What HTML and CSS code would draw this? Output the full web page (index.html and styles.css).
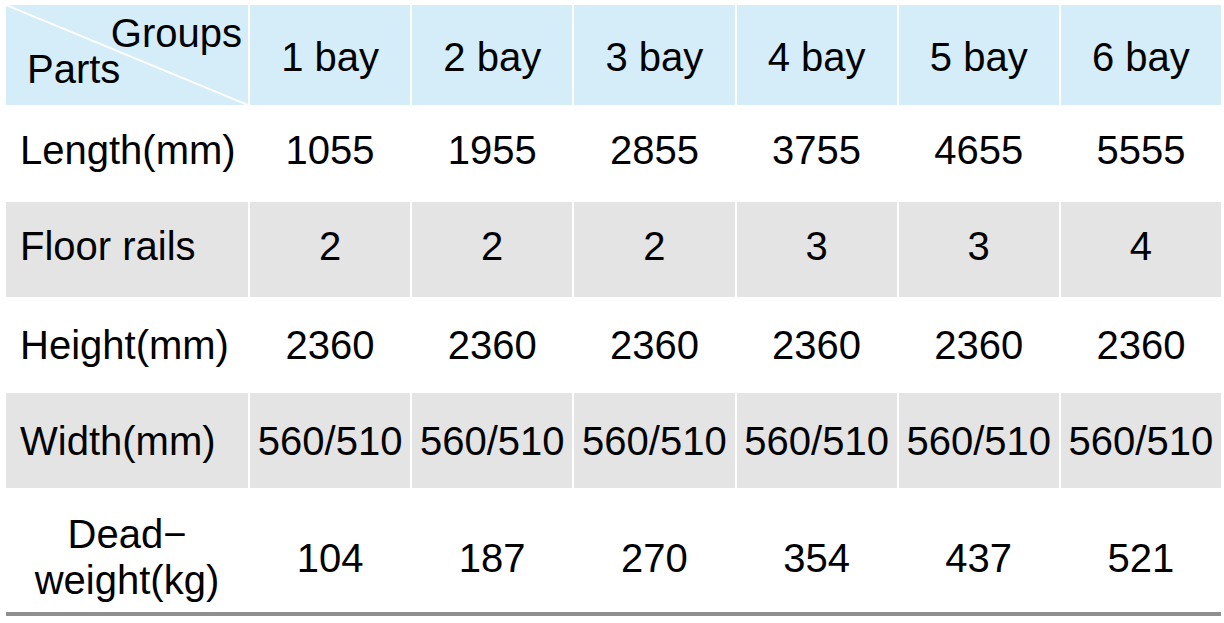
FILE: index.html
```html
<!DOCTYPE html>
<html lang="en">
<head>
<meta charset="utf-8">
<title>Bay specifications</title>
<link rel="stylesheet" href="styles.css">
</head>
<body>
<div class="spec">
  <div class="cell corner">
    <svg class="diag" viewBox="0 0 100 100" preserveAspectRatio="none" aria-hidden="true">
      <line x1="0" y1="0" x2="100" y2="100" stroke="#ffffff" stroke-width="2" vector-effect="non-scaling-stroke"/>
    </svg>
    <div class="groups">Groups</div>
    <div class="parts">Parts</div>
  </div>
  <div class="cell head">1 bay</div>
  <div class="cell head">2 bay</div>
  <div class="cell head">3 bay</div>
  <div class="cell head">4 bay</div>
  <div class="cell head">5 bay</div>
  <div class="cell head">6 bay</div>

  <div class="cell label up">Length(mm)</div>
  <div class="cell up">1055</div>
  <div class="cell up">1955</div>
  <div class="cell up">2855</div>
  <div class="cell up">3755</div>
  <div class="cell up">4655</div>
  <div class="cell up">5555</div>

  <div class="cell label alt up">Floor rails</div>
  <div class="cell alt up">2</div>
  <div class="cell alt up">2</div>
  <div class="cell alt up">2</div>
  <div class="cell alt up">3</div>
  <div class="cell alt up">3</div>
  <div class="cell alt up">4</div>

  <div class="cell label">Height(mm)</div>
  <div class="cell">2360</div>
  <div class="cell">2360</div>
  <div class="cell">2360</div>
  <div class="cell">2360</div>
  <div class="cell">2360</div>
  <div class="cell">2360</div>

  <div class="cell label alt">Width(mm)</div>
  <div class="cell alt">560/510</div>
  <div class="cell alt">560/510</div>
  <div class="cell alt">560/510</div>
  <div class="cell alt">560/510</div>
  <div class="cell alt">560/510</div>
  <div class="cell alt">560/510</div>

  <div class="cell label two-line">Dead−<br>weight(kg)</div>
  <div class="cell last">104</div>
  <div class="cell last">187</div>
  <div class="cell last">270</div>
  <div class="cell last">354</div>
  <div class="cell last">437</div>
  <div class="cell last">521</div>
</div>
</body>
</html>
```

FILE: styles.css
```css
html, body {
  margin: 0;
  padding: 0;
  background: #ffffff;
}

body {
  font-family: "Liberation Sans", Arial, sans-serif;
  color: #000000;
}

.spec {
  display: grid;
  grid-template-columns: 242px repeat(6, 1fr);
  grid-template-rows: 100px 93px 95px 92px 95px 122px;
  column-gap: 2px;
  row-gap: 2px;
  width: 1215px;
  margin: 5px 0 0 6px;
  border-bottom: 4px solid #8f8f8f;
}

.cell {
  display: flex;
  align-items: center;
  justify-content: center;
  box-sizing: border-box;
  font-size: 40px;
  line-height: 44px;
  white-space: nowrap;
  background: #ffffff;
}

.head {
  background: #d5ecf9;
  padding-top: 4px;
}

.alt {
  background: #e4e4e4;
}

.up {
  padding-bottom: 7px;
}

.last {
  padding-top: 14px;
}

.label {
  justify-content: flex-start;
  padding-left: 14px;
}

.two-line {
  justify-content: center;
  text-align: center;
  padding-left: 0;
  line-height: 46px;
  padding-top: 12px;
}

.corner {
  position: relative;
  display: block;
  background: #d5ecf9;
  padding-top: 10px;
}

.diag {
  position: absolute;
  left: 0;
  top: 0;
  width: 100%;
  height: 100%;
}

.groups {
  position: relative;
  text-align: right;
  line-height: 36px;
  padding-right: 6px;
}

.parts {
  position: relative;
  line-height: 36px;
  padding-left: 21px;
}
```
